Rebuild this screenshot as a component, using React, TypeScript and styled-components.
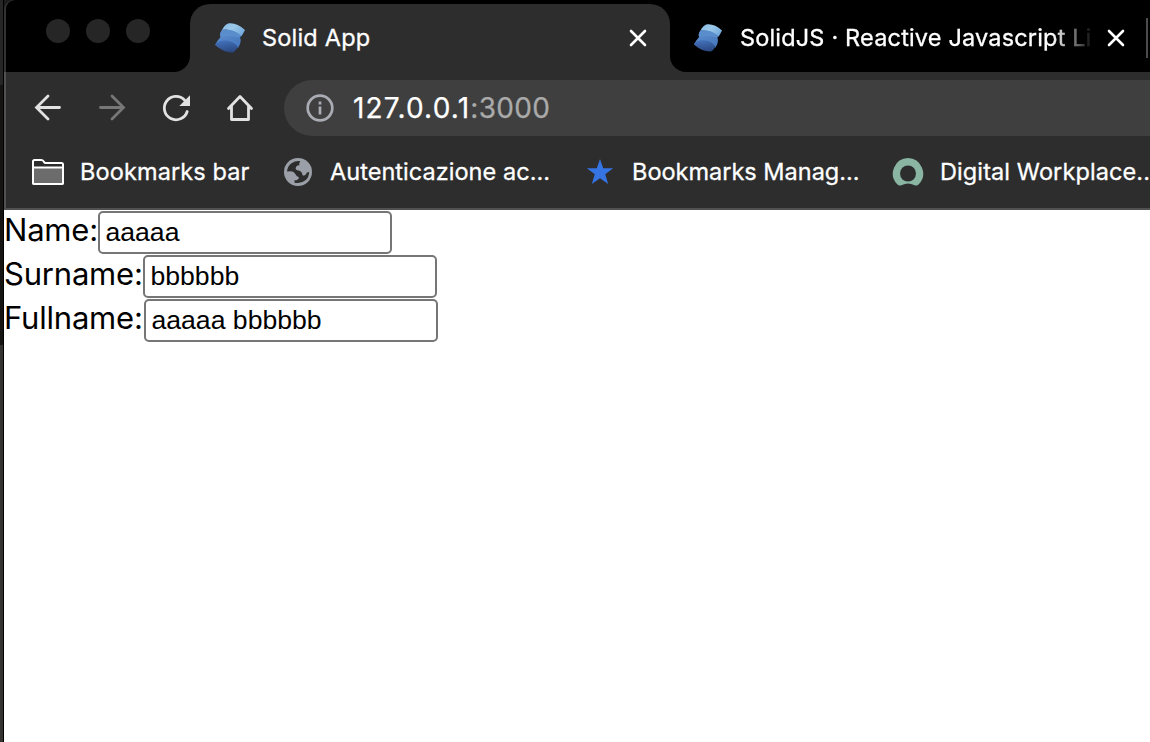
import React, { useState } from "react";
import styled, { createGlobalStyle } from "styled-components";

const Global = createGlobalStyle`
  *, *::before, *::after { box-sizing: border-box; }
  body { margin: 0; overflow: hidden; background: #fff; }
  svg { display: block; flex: none; }
`;

const Screen = styled.div`
  display: flex;
  width: 1150px;
  height: 742px;
  overflow: hidden;
  background: #000;
  font-family: Inter, "Liberation Sans", sans-serif;
`;

const Desktop = styled.div`
  flex: none;
  width: 4px;
  border-right: 1px solid #000;
  background: linear-gradient(#262626 0 85px, #151412 85px 345px, #363430 345px);
`;

const Window = styled.div`
  flex: 1;
  min-width: 0;
  display: flex;
  flex-direction: column;
  background: #1c1c1c;
`;

const Chrome = styled.header`
  height: 210px;
  padding-left: 2px;
  border-bottom: 2px solid #515151;
  border-top-left-radius: 10px;
  background: linear-gradient(#333 0 72px, #515151 72px);
  color: #fff;
  overflow: hidden;
`;

const TabStrip = styled.div`
  display: flex;
  height: 72px;
  border-top-left-radius: 9px;
  background: #2d2d2d;
  overflow: hidden;
`;

const Lights = styled.div`
  flex: none;
  display: flex;
  gap: 16px;
  width: 184px;
  padding: 19px 0 0 40px;
  background: #000;
  border-bottom-right-radius: 16px;
`;

const Light = styled.span`
  width: 24px;
  height: 24px;
  border-radius: 50%;
  background: #262626;
`;

const ActiveWrap = styled.div`
  flex: none;
  width: 480px;
  display: flex;
  flex-direction: column;
  background: linear-gradient(#000 0 36px, #2d2d2d 36px);
`;

const Tab = styled.div<{ $active?: boolean }>`
  display: flex;
  align-items: center;
  height: ${(p) => (p.$active ? 68 : 72)}px;
  margin-top: ${(p) => (p.$active ? 4 : 0)}px;
  padding: ${(p) => (p.$active ? "0 22px 0 24px" : "4px 2px 0 23px")};
  border-radius: ${(p) => (p.$active ? "20px 20px 0 0" : "0 0 0 16px")};
  background: ${(p) => (p.$active ? "#2d2d2d" : "#000")};
  ${(p) => (p.$active ? "" : "flex: 1; min-width: 0;")}
`;

const Title = styled.span<{ $track: number; $fade?: boolean }>`
  flex: 1;
  min-width: 0;
  margin-left: ${(p) => (p.$fade ? 17 : 16)}px;
  overflow: hidden;
  white-space: nowrap;
  font-size: 23.5px;
  line-height: 32px;
  letter-spacing: ${(p) => p.$track}px;
  -webkit-text-stroke: 0.3px currentColor;
  ${(p) => (p.$fade ? "mask-image: linear-gradient(90deg, #000 312px, transparent 354px);" : "")}
`;

const Divider = styled.span`
  width: 2px;
  height: 40px;
  margin-left: 20px;
  background: #4c4c4c;
`;

const Toolbar = styled.div`
  display: flex;
  align-items: center;
  height: 72px;
  padding-left: 26px;
  background: #2d2d2d;
`;

const Tools = styled.div`
  display: flex;
  gap: 32px;
  margin-right: 28px;
`;

const Address = styled.div`
  flex: 1;
  display: flex;
  align-items: center;
  height: 56px;
  padding-left: 22px;
  border-radius: 28px 0 0 28px;
  background: #3f3f3f;
  font-size: 28px;
  white-space: nowrap;
`;

const Url = styled.span`
  margin-left: 19px;
  letter-spacing: 1.2px;
  -webkit-text-stroke: 0.25px currentColor;
`;

const Port = styled.span`
  color: #aaa;
  letter-spacing: 0.3px;
`;

const Bookmarks = styled.nav`
  display: flex;
  align-items: center;
  height: 64px;
  padding: 0 0 8px 26px;
  background: #2d2d2d;
`;

const Bookmark = styled.div<{ $width: number; $gap: number; $track: number }>`
  flex: none;
  display: flex;
  align-items: center;
  gap: ${(p) => p.$gap}px;
  width: ${(p) => p.$width}px;
  font-size: 23.5px;
  line-height: 32px;
  letter-spacing: ${(p) => p.$track}px;
  white-space: nowrap;
  -webkit-text-stroke: 0.3px currentColor;
`;

const Page = styled.main`
  flex: 1;
  padding-top: 1px;
  background: #fff;
  color: #000;
`;

const Row = styled.div`
  display: flex;
  height: 44px;
`;

const Label = styled.label<{ $width: number }>`
  flex: none;
  width: ${(p) => p.$width}px;
  font-size: 31px;
  line-height: 38px;
  letter-spacing: -0.2px;
  white-space: nowrap;
`;

const Field = styled.input`
  width: 294px;
  height: 43px;
  margin: 0;
  padding: 0 6px 1px 5.500px;
  border: 2px solid #767676;
  border-radius: 5px;
  background: #fff;
  outline: none;
  color: #000;
  font: 26.6px "Liberation Sans", Arial, sans-serif;
`;

const SolidLogo = ({ size, id }: { size: number; id: string }) => (
  <svg width={size} height={size} viewBox="0 0 32 32">
    <defs>
      <linearGradient id={id + "a"} x1="0" y1="0" x2="1" y2="0.6">
        <stop offset="0" stopColor="#85b9e2" />
        <stop offset="0.5" stopColor="#9bc9ea" />
        <stop offset="1" stopColor="#75aadb" />
      </linearGradient>
      <linearGradient id={id + "b"} x1="0" y1="0" x2="0.8" y2="1">
        <stop offset="0" stopColor="#5d91d0" />
        <stop offset="1" stopColor="#4777bd" />
      </linearGradient>
      <linearGradient id={id + "c"} x1="0.3" y1="0" x2="0.6" y2="1">
        <stop offset="0" stopColor="#4472bc" />
        <stop offset="1" stopColor="#29477f" />
      </linearGradient>
    </defs>
    <path d="M8 8Q5 12 6.500 15Q3 19 1 23L9 22L24 26Q28 20 26 15Q28 14 28 13L18 7Z" fill={`url(#${id}b)`} />
    <path d="M8 8Q11 2 15 1.300Q23 .5 31 8Q29 12 27.500 14Q17 6 8 8Z" fill={`url(#${id}a)`} />
    <path d="M8 8Q18 6 27.500 14L25 15.500Q17 13 7 15.500Q5 12 8 8Z" fill="#5a8dcc" />
    <path d="M1 23Q4 18.500 10 18.500Q19 18 24 25Q22 29 19 30.500Q10 31 1 23Z" fill={`url(#${id}c)`} />
  </svg>
);

const CloseIcon = () => (
  <svg width="20" height="20" viewBox="0 0 20 20" stroke="#fff" strokeWidth="2.600" strokeLinecap="round">
    <path d="M3 3L17 17M17 3L3 17" />
  </svg>
);

const ToolIcon = ({ children, dim }: { children: React.ReactNode; dim?: boolean }) => (
  <svg width="32" height="32" viewBox="0 0 32 32" fill="none" stroke={dim ? "#777" : "#e2e2e2"} strokeWidth="2.800" strokeLinecap="round">
    {children}
  </svg>
);

const FolderIcon = () => (
  <svg width="32" height="26" viewBox="0 0 32 26" stroke="#fff" strokeWidth="2" strokeLinejoin="round">
    <path d="M1 2.500Q1 1 2.500 1H9.500Q11 1 12 3L13 4H29.500Q31 4 31 5.500V23.500Q31 25 29.500 25H2.500Q1 25 1 23.500Z" fill="#2d2d2d" />
    <path d="M1 8.500H31V23.500Q31 25 29.500 25H2.500Q1 25 1 23.500Z" fill="#6c6c6c" />
  </svg>
);

const GlobeIcon = () => (
  <svg width="28" height="28" viewBox="0 0 28 28">
    <circle cx="14" cy="14" r="14" fill="#9ba0a8" />
    <path d="M3 13.500Q3.500 8 7.500 5.200Q11.500 2.500 16.300 3.200Q14.500 5.500 15.300 7.200Q12 7.200 11.700 10.300Q11.500 12 14.500 12.500Q18 13 18.500 17.200Q21.500 18 22 16Q22.500 14.200 25.200 14Q25 19 21.800 22Q17 26.200 10.500 24.700V22.300Q14.500 22.500 15 19.500Q12.500 18.500 11.300 16Q10 13.500 7 13.300Z" fill="#2d2d2d" />
  </svg>
);

function Browser() {
  return (
    <Chrome>
      <TabStrip>
        <Lights><Light /><Light /><Light /></Lights>
        <ActiveWrap>
          <Tab $active>
            <SolidLogo size={32} id="s1" />
            <Title $track={0.2}>Solid App</Title>
            <CloseIcon />
          </Tab>
        </ActiveWrap>
        <Tab>
          <SolidLogo size={30} id="s2" />
          <Title $track={0.17} $fade>SolidJS · Reactive Javascript Li</Title>
          <CloseIcon />
          <Divider />
        </Tab>
      </TabStrip>
      <Toolbar>
        <Tools>
          <ToolIcon><path d="M27.500 15.500H5M16 4L4.500 15.500L16 27" /></ToolIcon>
          <ToolIcon dim><path d="M4.500 15.500H27M16 4L27.500 15.500L16 27" /></ToolIcon>
          <ToolIcon>
            <path d="M27.200 19.500A11.700 11.700 0 1 1 24.500 8" />
            <path d="M30 3.300V14H19.300Z" fill="#e2e2e2" stroke="none" />
          </ToolIcon>
          <ToolIcon><path d="M4.500 16.500L16 4.500L27.500 16.500M7.500 14V27.500H24.500V14" strokeLinejoin="round" /></ToolIcon>
        </Tools>
        <Address>
          <svg width="28" height="28" viewBox="0 0 28 28" fill="none" stroke="#a9adb3" strokeWidth="2.700">
            <circle cx="14" cy="14" r="12.300" />
            <path d="M14 12.500V20.500M14 7.500V10.500" />
          </svg>
          <Url>127.0.0.1<Port>:3000</Port></Url>
        </Address>
      </Toolbar>
      <Bookmarks>
        <Bookmark $width={252} $gap={16} $track={0.12}><FolderIcon />Bookmarks bar</Bookmark>
        <Bookmark $width={302} $gap={18} $track={0.04}><GlobeIcon />Autenticazione ac...</Bookmark>
        <Bookmark $width={306} $gap={18} $track={0}>
          <svg width="28" height="28" viewBox="0 0 28 28">
            <path d="M14 1L17.200 10.300H27.200L19.200 16.200L22.200 26L14 20.200L5.800 26L8.800 16.200L.8 10.300H10.800Z" fill="#3574e2" />
          </svg>
          Bookmarks Manag...
        </Bookmark>
        <Bookmark $width={300} $gap={16} $track={0.1}>
          <svg width="32" height="30" viewBox="0 0 32 30">
            <path d="M16 1A15.500 15.500 0 0 0 5 27Q7 29.500 10 28Q16 25 22 28Q25 29.500 27 27A15.500 15.500 0 0 0 16 1Z" fill="#8ab5a3" />
            <circle cx="16" cy="16.500" r="8" fill="#2d2d2d" />
          </svg>
          Digital Workplace...
        </Bookmark>
      </Bookmarks>
    </Chrome>
  );
}

export default function App() {
  const [name, setName] = useState("aaaaa");
  const [surname, setSurname] = useState("bbbbbb");
  return (
    <Screen>
      <Global />
      <Desktop />
      <Window>
        <Browser />
        <Page>
          <Row>
            <Label $width={94}>Name:</Label>
            <Field value={name} onChange={(e) => setName(e.target.value)} />
          </Row>
          <Row>
            <Label $width={139}>Surname:</Label>
            <Field value={surname} onChange={(e) => setSurname(e.target.value)} />
          </Row>
          <Row>
            <Label $width={140}>Fullname:</Label>
            <Field value={`${name} ${surname}`} readOnly />
          </Row>
        </Page>
      </Window>
    </Screen>
  );
}
